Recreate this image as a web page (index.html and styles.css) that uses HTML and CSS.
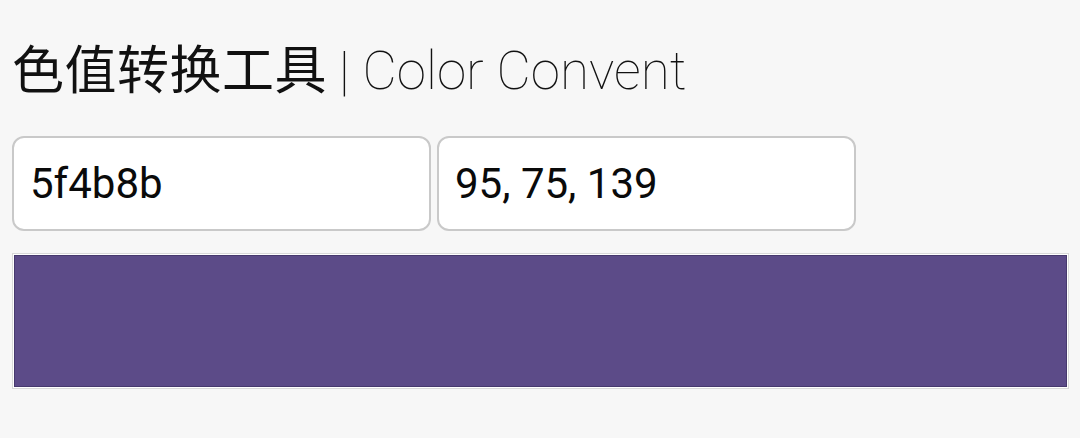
FILE: index.html
```html
<!DOCTYPE html>
<html lang="zh">
<head>
    <meta charset="UTF-8">
    <meta name="viewport" content="width=device-width, initial-scale=1.0">
    <title>色值转换工具</title>
    <link rel="stylesheet" href="styles.css">
</head>
<body>

    <h1 class="title">色值转换工具<span class="title-en"><span class="title-bar">|</span>Color Convent</span></h1>

    <div class="fields">
        <input class="field" type="text" id="hex" value="5f4b8b">
        <input class="field" type="text" id="rgb" value="95, 75, 139">
    </div>

    <div class="swatch">
        <div class="swatch-color" id="swatch"></div>
    </div>

</body>
</html>
```

FILE: styles.css
```css
body {
    margin: 0;
    padding: 0 12px;
    background-color: #f7f7f7;
    font-family: Roboto, "Noto Sans CJK SC", sans-serif;
    color: #111;
}
.title {
    margin: 0;
    padding-top: 37px;
    height: 98px;
    box-sizing: border-box;
    font-family: "Noto Sans CJK SC", sans-serif;
    font-size: 52px;
    font-weight: 400;
    line-height: 60px;
    letter-spacing: 0.5px;
}
.title-en {
    font-family: Roboto, sans-serif;
    font-size: 53px;
    font-weight: 100;
    letter-spacing: 0;
    color: #111;
}
.title-bar {
    margin: 0 13px 0 12px;
}
.fields {
    display: flex;
    gap: 6px;
    margin-top: 38px;
}
.field {
    width: 419px;
    height: 95px;
    box-sizing: border-box;
    padding: 0 16px;
    border: 2px solid #c9c9c9;
    border-radius: 12px;
    background-color: #fff;
    font-family: Roboto, sans-serif;
    font-size: 42px;
    color: #0a0a0a;
    outline: none;
}
.swatch {
    margin-top: 22px;
    width: 1057px;
    box-sizing: border-box;
    border: 1px solid #d9d9d9;
    padding: 1px;
    background-color: #fff;
}
.swatch-color {
    height: 130px;
    border: 1px solid #47396e;
    background-color: #5c4b88;
}
```
